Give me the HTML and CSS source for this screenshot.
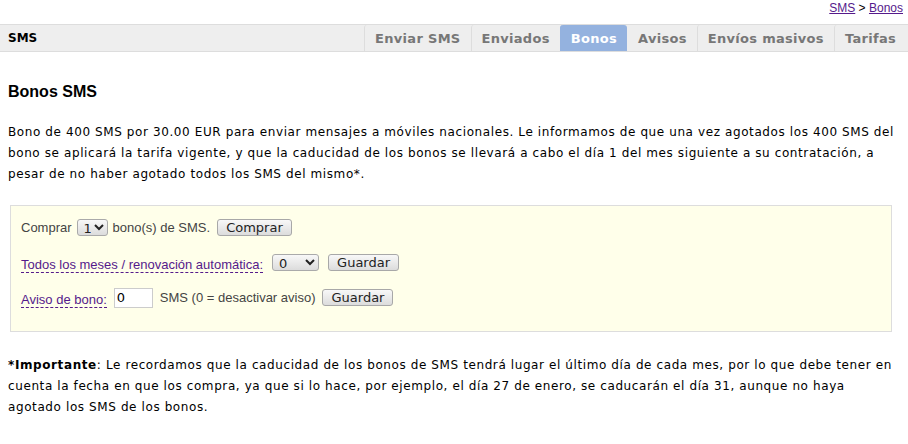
FILE: index.html
```html
<!DOCTYPE html>
<html lang="es">
<head>
  <meta charset="UTF-8" />
  <title>Bonos SMS</title>
  <link rel="stylesheet" href="styles.css">
</head>
<body>
  <div class="crumbs">
    <a href="#">SMS</a> &gt; <a href="#">Bonos</a>
  </div>

  <div class="tabbar">
    <div class="section">SMS</div>
    <ul class="tabs">
      <li><a href="#">Enviar SMS</a></li>
      <li><a href="#">Enviados</a></li>
      <li class="active"><a href="#">Bonos</a></li>
      <li><a href="#">Avisos</a></li>
      <li><a href="#">Envíos masivos</a></li>
      <li><a href="#">Tarifas</a></li>
    </ul>
  </div>

  <div class="content">
    <h1>Bonos SMS</h1>

    <p class="text">Bono de 400 SMS por 30.00 EUR para enviar mensajes a móviles nacionales. Le informamos de que una vez agotados los 400 SMS del bono se aplicará la tarifa vigente, y que la caducidad de los bonos se llevará a cabo el día 1 del mes siguiente a su contratación, a pesar de no haber agotado todos los SMS del mismo*.</p>

    <div class="box">
      <form class="row">
        Comprar
        <select class="sel-small"><option>1</option><option>2</option><option>3</option></select>
        bono(s) de SMS.
        <button type="button" class="btn">Comprar</button>
      </form>
      <form class="row">
        <span class="hint">Todos los meses / renovación automática:</span>
        <select class="sel-wide"><option>0</option><option>1</option><option>2</option></select>
        <button type="button" class="btn wide-gap">Guardar</button>
      </form>
      <form class="row">
        <span class="hint">Aviso de bono:</span>
        <input type="text" class="num" value="0">
        SMS (0 = desactivar aviso)
        <button type="button" class="btn">Guardar</button>
      </form>
    </div>

    <p class="text important"><b>*Importante</b>: Le recordamos que la caducidad de los bonos de SMS tendrá lugar el último día de cada mes, por lo que debe tener en cuenta la fecha en que los compra, ya que si lo hace, por ejemplo, el día 27 de enero, se caducarán el día 31, aunque no haya agotado los SMS de los bonos.</p>
  </div>
</body>
</html>
```

FILE: styles.css
```css
body {
  margin: 0;
  padding: 0;
  background: #fff;
  color: #000;
  font-family: "DejaVu Sans", Verdana, sans-serif;
  font-size: 12px;
}
a {
  color: #551a8b;
}
.crumbs {
  font-family: "Liberation Sans", Arial, sans-serif;
  font-size: 12px;
  text-align: right;
  padding: 1px 5px 0 0;
  height: 24px;
  box-sizing: border-box;
}
.tabbar {
  display: flex;
  justify-content: space-between;
  align-items: stretch;
  background: #eee;
  border-top: 1px solid #ddd;
  border-bottom: 1px solid #ddd;
  height: 26px;
}
.section {
  font-weight: bold;
  font-size: 12px;
  padding-left: 8px;
  display: flex;
  align-items: center;
}
.tabs {
  list-style: none;
  margin: 0;
  padding: 0 2px 0 0;
  display: flex;
}
.tabs li {
  display: flex;
  border-left: 1px solid #ddd;
  border-radius: 3px 3px 0 0;
}
.tabs li a {
  display: flex;
  align-items: center;
  padding: 0 10px;
  color: #777;
  font-weight: bold;
  font-size: 13px;
  text-decoration: none;
  letter-spacing: 0.3px;
}
.tabs li.active {
  background: #94b2df;
  border-left-color: #94b2df;
}
.tabs li.active a {
  color: #fff;
}
.tabs li.active + li {
  border-left-color: #eee;
}
.content {
  padding: 0 8px;
}
h1 {
  font-family: "Liberation Sans", Arial, sans-serif;
  font-size: 16px;
  margin: 30px 0 0;
  line-height: 20px;
}
.text {
  line-height: 21px;
  margin: 20px 0 0;
  letter-spacing: 0.6px;
}
.important {
  margin-top: 23px;
}
.box {
  margin: 20px 8px 0 2px;
  background: #ffffea;
  border: 1px solid #ddd;
  padding: 11px 10px 23px;
  font-family: "Liberation Sans", Arial, sans-serif;
  font-size: 13px;
  color: #444;
}
.row {
  display: flex;
  align-items: center;
  gap: 5px;
  height: 21px;
  margin: 0 0 14px;
}
.row:last-child {
  margin-bottom: 0;
}
.hint {
  color: #551a8b;
  border-bottom: 1px dashed #551a8b;
  line-height: 15px;
  margin-top: 4px;
}
.btn {
  font-family: "DejaVu Sans", sans-serif;
  font-size: 13px;
  color: #222;
  background: linear-gradient(#f8f8f8, #dcdcdc);
  border: 1px solid #a8a8a8;
  border-radius: 3px;
  height: 17px;
  padding: 0 8px;
  line-height: 14px;
  margin-left: 2px;
}
.wide-gap {
  margin-left: 4px;
}
select {
  font-family: "DejaVu Sans", sans-serif;
  font-size: 13px;
  color: #222;
  height: 17px;
  padding: 0 0 0 2px;
  border: 1px solid #aaa;
  border-radius: 3px;
  background: linear-gradient(#f8f8f8, #dcdcdc);
}
.sel-small {
  width: 31px;
}
.sel-wide {
  width: 47px;
  margin-left: 4px;
}
.num {
  width: 33px;
  height: 18px;
  padding: 0 2px;
  border: 1px solid #ccc;
  font-family: "DejaVu Sans", sans-serif;
  font-size: 13px;
  box-sizing: content-box;
  margin: 0 2px 0 2px;
}
```
